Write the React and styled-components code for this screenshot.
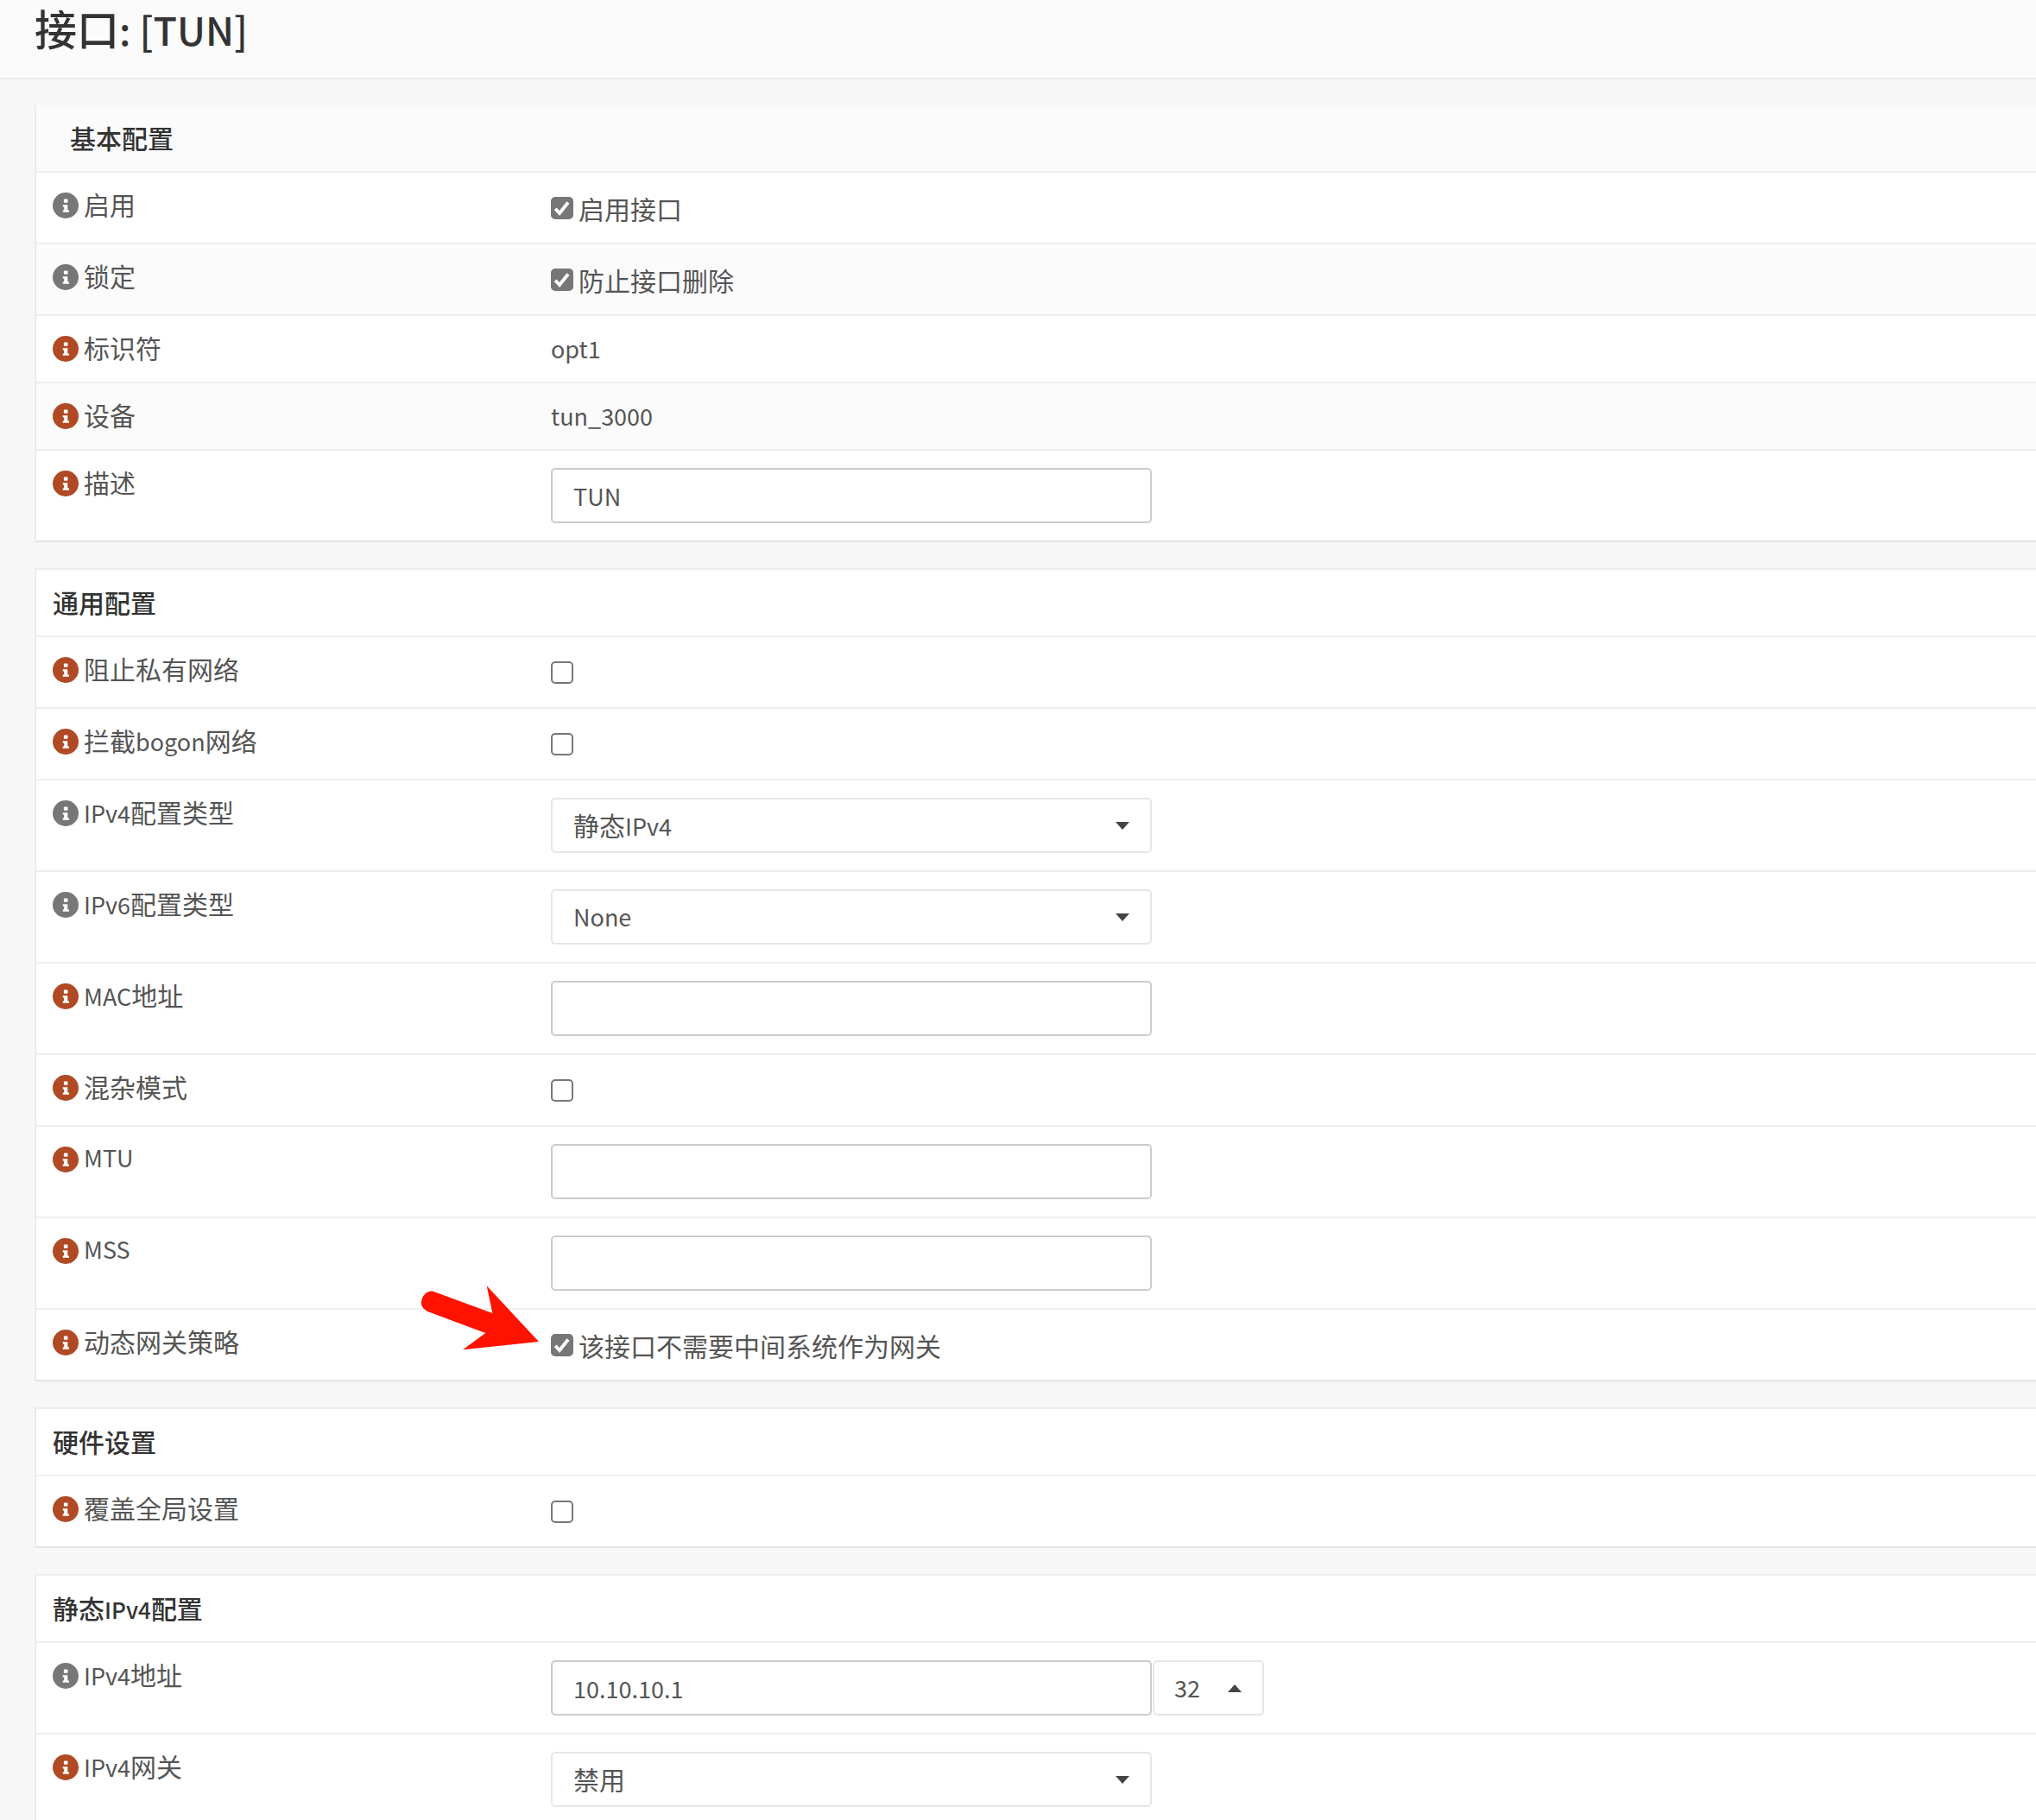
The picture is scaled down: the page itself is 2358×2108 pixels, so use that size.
import React from "react";
import styled, { createGlobalStyle } from "styled-components";

const Global = createGlobalStyle`
  html, body { margin: 0; padding: 0; height: 2108px; overflow: hidden; background: #f7f7f7; }
  body { font-family: "Noto Sans CJK SC", "Noto Sans", sans-serif; color: #555; }
  * { box-sizing: border-box; }
`;

const Page = styled.div`
  height: 2108px;
  overflow: hidden;
`;
const Header = styled.header`
  height: 92px;
  padding-left: 40px;
  background: #fbfbfb;
  border-bottom: 2px solid #ececec;
`;
const Title = styled.h1`
  margin: 0;
  font-size: 45px;
  line-height: 64px;
  font-weight: 500;
  color: #333;
  --cjk: 49px;
`;
const Main = styled.main`
  padding: 30px 0 0 40px;
  display: flex;
  flex-direction: column;
  gap: 30px;
`;
const Panel = styled.section`
  background: #fff;
  border-left: 2px solid #ebebeb;
  border-top: ${p => (p.$plain ? "0" : "2px solid #eee")};
`;
const PanelHead = styled.div`
  height: 78px;
  padding: 0 0 3px ${p => (p.$plain ? "39px" : "19px")};
  display: flex;
  align-items: center;
  font-size: 26px;
  --cjk: 30px;
  font-weight: 500;
  color: #333;
  background: ${p => (p.$plain ? "#fbfbfb" : "#fff")};
  border-bottom: 2px solid #eee;
`;
const Row = styled.div`
  position: relative;
  display: grid;
  grid-template-columns: 596px 1fr;
  height: ${p => p.$h}px;
  background: ${p => (p.$alt ? "#fbfbfb" : "#fff")};
  border-bottom: 2px solid ${p => (p.$last ? "#e4e4e4" : "#eee")};
`;
const LabelCell = styled.div`
  display: flex;
  align-items: flex-start;
  gap: 6px;
  padding: 16px 0 0 19px;
  font-size: 27px;
  line-height: 40px;
  color: #555;
`;
const IconSvg = styled.svg`
  flex: none;
  width: 30px;
  height: 30px;
  margin-top: 7px;
  color: ${p => (p.$red ? "#b04a24" : "#777")};
`;
const ValuePad = styled.div`
  padding-top: ${p => p.$t}px;
  display: ${p => (p.$flex ? "flex" : "block")};
  font-size: 27px;
  line-height: 40px;
  color: #555;
`;
const CheckWrap = styled.label`
  display: flex;
  align-items: flex-start;
  gap: 6px;
  font-size: 27px;
  line-height: 40px;
  color: #555;
`;
const Box = styled.span`
  flex: none;
  width: 26px;
  height: 26px;
  margin-top: 28px;
  border-radius: 5px;
  border: 2px solid #777;
  background: ${p => (p.$on ? "#777" : "#fff")};
  display: flex;
  align-items: center;
  justify-content: center;
`;
const CheckText = styled.span`
  padding-top: 21px;
`;
const TextInput = styled.input`
  width: 696px;
  height: 64px;
  padding: 0 24px;
  border: 2px solid #ccc;
  border-radius: 5px;
  background: #fff;
  font: 400 27px "Noto Sans CJK SC", sans-serif;
  color: #555;
  outline: none;
`;
const SelectBox = styled.div`
  width: ${p => p.$w || 696}px;
  height: 64px;
  margin-left: ${p => p.$ml || 0}px;
  padding: 0 24px 0 ${p => (p.$small ? 23 : 24)}px;
  border: 2px solid #e6e6e6;
  border-radius: 5px;
  background: #fff;
  display: flex;
  align-items: center;
  justify-content: space-between;
`;
const Caret = styled.svg`
  width: 16px;
  height: 9px;
  fill: #444;
`;
const Arrow = styled.svg`
  position: absolute;
  left: 446px;
  top: -28px;
  width: 136px;
  height: 75px;
  fill: #ff1300;
  overflow: visible;
  pointer-events: none;
`;
const Cjk = styled.span`
  font-size: var(--cjk, 30px);
`;

// CJK glyphs sit at a larger size than the Latin runs in the same line.
const Mixed = ({ text }) =>
  text.split(/([\u4e00-\u9fff]+)/).filter(Boolean).map((part, i) =>
    /[\u4e00-\u9fff]/.test(part) ? <Cjk key={i}>{part}</Cjk> : <span key={i}>{part}</span>
  );

const InfoIcon = ({ red }) => (
  <IconSvg viewBox="0 0 30 30" $red={red}>
    <circle cx="15" cy="15" r="15" fill="currentColor" />
    <rect x="12.9" y="7.4" width="4.6" height="4.3" rx="0.7" fill="#fff" />
    <path d="M11.7 14.2 H17.3 V20.5 H19 V22.8 H11.7 V20.5 H13.2 V16.5 H11.7 Z" fill="#fff" />
  </IconSvg>
);

const CheckMark = () => (
  <svg width="22" height="22" viewBox="0 0 22 22">
    <path d="M3.2 11.8 L8 17 L18 4.5" fill="none" stroke="#fff" strokeWidth="3.8" />
  </svg>
);

const Check = ({ on, text }) => (
  <CheckWrap>
    <Box $on={on}>{on && <CheckMark />}</Box>
    {text && <CheckText><Mixed text={text} /></CheckText>}
  </CheckWrap>
);

const Select = ({ text, up, w, ml, small }) => (
  <SelectBox $w={w} $ml={ml} $small={small}>
    <span><Mixed text={text} /></span>
    <Caret viewBox="0 0 16 9">
      <path d={up ? "M8 0 L16 9 L0 9 Z" : "M0 0 L16 0 L8 9 Z"} />
    </Caret>
  </SelectBox>
);

const heights = { check: 83, empty: 83, plain: 78, input: 106, select: 106, ip: 106 };

const FormRow = ({ label, red, alt, kind, text, last, arrow }) => (
  <Row $h={heights[kind]} $alt={alt} $last={last}>
    <LabelCell>
      <InfoIcon red={red} />
      <span><Mixed text={label} /></span>
    </LabelCell>
    <div>
      {kind === "check" && <Check on text={text} />}
      {kind === "empty" && <Check />}
      {kind === "plain" && <ValuePad $t={18}>{text}</ValuePad>}
      {kind === "input" && <ValuePad $t={20}><TextInput readOnly defaultValue={text || ""} /></ValuePad>}
      {kind === "select" && <ValuePad $t={20}><Select text={text} /></ValuePad>}
      {kind === "ip" && (
        <ValuePad $t={20} $flex>
          <TextInput readOnly defaultValue={text} />
          <Select text="32" up w={129} ml={1} small />
        </ValuePad>
      )}
    </div>
    {arrow && (
      <Arrow viewBox="0 0 136 75">
        <path d="M14.5 7 L82.4 32 L75.7 0.3 L136 65 L48 74.3 L74.3 55 L8 30.3 C1 27 -1 22 0.3 17 C2 10 8 5 14.5 7 Z" />
      </Arrow>
    )}
  </Row>
);

const sections = [
  {
    title: "基本配置",
    plain: true,
    rows: [
      { label: "启用", kind: "check", text: "启用接口" },
      { label: "锁定", kind: "check", text: "防止接口删除", alt: true },
      { label: "标识符", red: true, kind: "plain", text: "opt1" },
      { label: "设备", red: true, kind: "plain", text: "tun_3000", alt: true },
      { label: "描述", red: true, kind: "input", text: "TUN", last: true },
    ],
  },
  {
    title: "通用配置",
    rows: [
      { label: "阻止私有网络", red: true, kind: "empty" },
      { label: "拦截bogon网络", red: true, kind: "empty" },
      { label: "IPv4配置类型", kind: "select", text: "静态IPv4" },
      { label: "IPv6配置类型", kind: "select", text: "None" },
      { label: "MAC地址", red: true, kind: "input" },
      { label: "混杂模式", red: true, kind: "empty" },
      { label: "MTU", red: true, kind: "input" },
      { label: "MSS", red: true, kind: "input" },
      { label: "动态网关策略", red: true, kind: "check", text: "该接口不需要中间系统作为网关", last: true, arrow: true },
    ],
  },
  {
    title: "硬件设置",
    rows: [{ label: "覆盖全局设置", red: true, kind: "empty", last: true }],
  },
  {
    title: "静态IPv4配置",
    rows: [
      { label: "IPv4地址", kind: "ip", text: "10.10.10.1" },
      { label: "IPv4网关", red: true, kind: "select", text: "禁用" },
    ],
  },
];

export default function App() {
  return (
    <Page>
      <Global />
      <Header>
        <Title><Mixed text="接口: [TUN]" /></Title>
      </Header>
      <Main>
        {sections.map(s => (
          <Panel key={s.title} $plain={s.plain}>
            <PanelHead $plain={s.plain}><span><Mixed text={s.title} /></span></PanelHead>
            {s.rows.map(r => (
              <FormRow key={r.label} {...r} />
            ))}
          </Panel>
        ))}
      </Main>
    </Page>
  );
}
